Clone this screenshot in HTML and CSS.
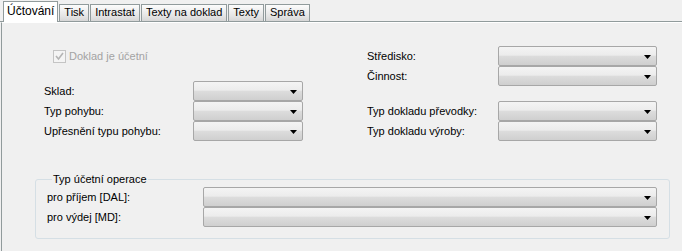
FILE: index.html
```html
<!DOCTYPE html>
<html lang="cs">
  <head>
    <meta charset="UTF-8" />
    <title>Účtování</title>
    <link rel="stylesheet" href="styles.css">
  </head>
  <body>
    <div class="tabs">
      <span class="tab active">Účtování</span>
      <span class="tab">Tisk</span>
      <span class="tab">Intrastat</span>
      <span class="tab">Texty na doklad</span>
      <span class="tab">Texty</span>
      <span class="tab">Správa</span>
    </div>
    <div class="panel">
      <div class="top">
        <div class="col-left">
          <div class="check-row">
            <span class="check">
              <svg width="9" height="9" viewBox="0 0 9 9"><path d="M1 4 L3.5 7 L8 1" fill="none" stroke="#b4b4b4" stroke-width="1.6"/></svg>
            </span>
            <span class="disabled">Doklad je účetní</span>
          </div>
          <div class="rows">
            <div class="row"><label>Sklad:</label><div class="combo"><svg width="7" height="4"><path d="M0 0h7l-3.5 4z"/></svg></div></div>
            <div class="row"><label>Typ pohybu:</label><div class="combo"><svg width="7" height="4"><path d="M0 0h7l-3.5 4z"/></svg></div></div>
            <div class="row"><label>Upřesnění typu pohybu:</label><div class="combo"><svg width="7" height="4"><path d="M0 0h7l-3.5 4z"/></svg></div></div>
          </div>
        </div>
        <div class="col-right">
          <div class="row"><label>Středisko:</label><div class="combo"><svg width="7" height="4"><path d="M0 0h7l-3.5 4z"/></svg></div></div>
          <div class="row"><label>Činnost:</label><div class="combo"><svg width="7" height="4"><path d="M0 0h7l-3.5 4z"/></svg></div></div>
          <div class="rows">
            <div class="row"><label>Typ dokladu převodky:</label><div class="combo"><svg width="7" height="4"><path d="M0 0h7l-3.5 4z"/></svg></div></div>
            <div class="row"><label>Typ dokladu výroby:</label><div class="combo"><svg width="7" height="4"><path d="M0 0h7l-3.5 4z"/></svg></div></div>
          </div>
        </div>
      </div>
      <fieldset class="group">
        <legend>Typ účetní operace</legend>
        <div class="row"><label>pro příjem [DAL]:</label><div class="combo"><svg width="7" height="4"><path d="M0 0h7l-3.5 4z"/></svg></div></div>
        <div class="row"><label>pro výdej [MD]:</label><div class="combo"><svg width="7" height="4"><path d="M0 0h7l-3.5 4z"/></svg></div></div>
      </fieldset>
    </div>
  </body>
</html>
```
FILE: styles.css
```css
* {
  margin: 0;
  padding: 0;
  box-sizing: border-box;
}
body {
  font-family: "Liberation Sans", Arial, sans-serif;
  font-size: 11px;
  color: #000;
  background: #f0f0f0;
  height: 251px;
  overflow: hidden;
}
.tabs {
  display: flex;
  align-items: flex-end;
  height: 22px;
  padding: 0 0 0 3px;
  border-bottom: 1px solid #919b9c;
}
.tab {
  display: block;
  height: 17px;
  line-height: 15px;
  padding: 0 4px;
  margin-left: 1px;
  border: 1px solid #919b9c;
  border-bottom: none;
  background: linear-gradient(#fcfcfc, #e4e4e4 70%, #d6d6d6);
}
.tab.active {
  height: 21px;
  line-height: 18px;
  padding: 0 3px;
  margin: 0 0 -1px 0;
  font-size: 12px;
  background: #fff;
}
.panel {
  height: 229px;
  margin-left: 1px;
  padding-top: 23px;
  border-left: 1px solid #919b9c;
  border-top: 1px solid #fff;
}
.top {
  display: flex;
  padding-left: 42px;
}
.col-left {
  width: 323px;
}
.check-row {
  display: flex;
  align-items: center;
  height: 20px;
  padding-left: 9px;
}
.check {
  display: flex;
  align-items: center;
  justify-content: center;
  width: 13px;
  height: 13px;
  margin-right: 3px;
  border: 1px solid #c4c4c4;
  background: #f4f4f4;
}
.disabled {
  color: #a3a3a3;
}
.rows {
  margin-top: 15px;
}
.row {
  display: flex;
  align-items: center;
  height: 20px;
}
.col-left label {
  width: 149px;
}
.col-left .combo {
  width: 110px;
}
.col-right label {
  width: 131px;
}
.col-right .combo {
  width: 159px;
}
.combo {
  display: flex;
  justify-content: flex-end;
  align-items: center;
  height: 20px;
  padding: 2px 5px 0 0;
  border: 1px solid #a7a7a7;
  border-radius: 2px;
  background: linear-gradient(#f4f4f4, #ececec 45%, #dcdcdc 52%, #cfcfcf);
}
.group {
  width: 635px;
  margin: 32px 0 0 33px;
  padding: 1px 12px 11px 11px;
  border: 1px solid #d5dfe5;
  border-radius: 3px;
}
.group legend {
  margin-left: 5px;
  padding: 0 1px;
  line-height: 13px;
}
.group label {
  width: 156px;
}
.group .combo {
  width: 454px;
}
```
